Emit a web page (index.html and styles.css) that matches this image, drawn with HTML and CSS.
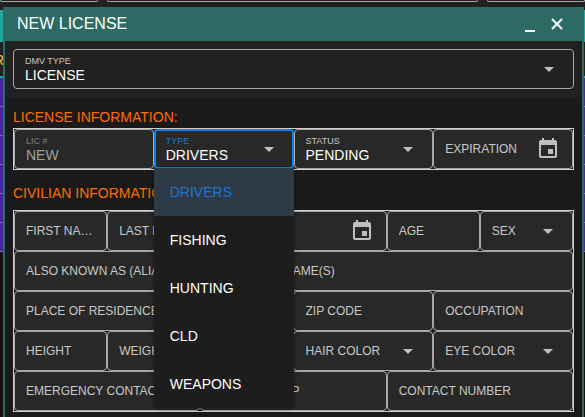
FILE: index.html
```html
<!DOCTYPE html>
<html lang="en">
<head>
<meta charset="utf-8">
<title>New License</title>
<link rel="stylesheet" href="styles.css">
</head>
<body>
<svg class="sprite">
  <symbol id="arrow" viewBox="0 0 24 24"><path d="M7 10l5 5 5-5z"/></symbol>
  <symbol id="event" viewBox="0 0 24 24"><path d="M17 12h-5v5h5v-5zM16 1v2H8V1H6v2H5c-1.11 0-1.99.9-1.99 2L3 19c0 1.1.89 2 2 2h14c1.1 0 2-.9 2-2V5c0-1.1-.9-2-2-2h-1V1h-2zm3 18H5V8h14v11z"/></symbol>
</svg>

<div class="page">
  <div class="page-inputs"><span></span><span></span><span></span></div>
  <div class="page-bar"></div>
  <div class="page-heading">R</div>
  <div class="page-rows"><i></i><i></i><i></i><i></i><i></i><i></i></div>
</div>

<main class="overlay">
  <section class="dialog" aria-labelledby="title">
    <header class="dialog-header">
      <h1 id="title">NEW LICENSE</h1>
      <button type="button" aria-label="Minimize"><svg class="minimize" viewBox="0 0 12 16"><path d="M1 15h10"/></svg></button>
      <button type="button" aria-label="Close"><svg viewBox="0 0 12 12"><path d="M1 1l10 10M11 1L1 11"/></svg></button>
    </header>

    <div class="dialog-type">
      <label class="field filled">
        <span class="label">DMV TYPE</span>
        <select><option>LICENSE</option></select>
        <svg class="icon"><use href="#arrow"/></svg>
      </label>
    </div>

    <form class="dialog-body">
      <h2>LICENSE INFORMATION:</h2>
      <div class="fields">
        <label class="field filled disabled w3">
          <span class="label">LIC #</span>
          <input type="text" value="NEW" disabled>
        </label>
        <div class="dropdown w3">
          <label class="field filled focused">
            <span class="label">TYPE</span>
            <select><option>DRIVERS</option><option>FISHING</option><option>HUNTING</option><option>CLD</option><option>WEAPONS</option></select>
            <svg class="icon"><use href="#arrow"/></svg>
          </label>
          <div class="menu">
            <button type="button" class="selected">DRIVERS</button>
            <button type="button">FISHING</button>
            <button type="button">HUNTING</button>
            <button type="button">CLD</button>
            <button type="button">WEAPONS</button>
          </div>
        </div>
        <label class="field filled w3">
          <span class="label">STATUS</span>
          <select><option>PENDING</option></select>
          <svg class="icon"><use href="#arrow"/></svg>
        </label>
        <label class="field w3">
          <span class="label">EXPIRATION</span>
          <input type="text">
          <svg class="icon"><use href="#event"/></svg>
        </label>
      </div>

      <h2>CIVILIAN INFORMATION:</h2>
      <div class="fields">
        <label class="field w2"><span class="label">FIRST NAME</span><input type="text"></label>
        <label class="field w3"><span class="label">LAST NAME</span><input type="text"></label>
        <label class="field w3"><span class="label">D.O.B.</span><input type="text"><svg class="icon"><use href="#event"/></svg></label>
        <label class="field w2"><span class="label">AGE</span><input type="text"></label>
        <label class="field w2"><span class="label">SEX</span><select><option></option></select><svg class="icon"><use href="#arrow"/></svg></label>

        <label class="field w12"><span class="label">ALSO KNOWN AS (ALIASES) AND PREVIOUS NAME(S)</span><input type="text"></label>

        <label class="field w6"><span class="label">PLACE OF RESIDENCE</span><input type="text"></label>
        <label class="field w3"><span class="label">ZIP CODE</span><input type="text"></label>
        <label class="field w3"><span class="label">OCCUPATION</span><input type="text"></label>

        <label class="field w2"><span class="label">HEIGHT</span><input type="text"></label>
        <label class="field w2"><span class="label">WEIGHT</span><input type="text"></label>
        <label class="field w2"><span class="label">RACE</span><input type="text"></label>
        <label class="field w3"><span class="label">HAIR COLOR</span><select><option></option></select><svg class="icon"><use href="#arrow"/></svg></label>
        <label class="field w3"><span class="label">EYE COLOR</span><select><option></option></select><svg class="icon"><use href="#arrow"/></svg></label>

        <label class="field w4"><span class="label">EMERGENCY CONTACT</span><input type="text"></label>
        <label class="field w4"><span class="label">RELATIONSHIP</span><input type="text"></label>
        <label class="field w4"><span class="label">CONTACT NUMBER</span><input type="text"></label>
      </div>
    </form>
  </section>
</main>
</body>
</html>
```
FILE: styles.css
```css
* { box-sizing: border-box; }

body {
  margin: 0;
  height: 100vh;
  overflow: hidden;
  background: #121212;
  color: #fff;
  font-family: "Liberation Sans", Arial, sans-serif;
  font-size: 14px;
}

h1, h2 { margin: 0; font-weight: 400; }

button, input, select {
  margin: 0;
  padding: 0;
  border: 0;
  outline: 0;
  background: none;
  color: inherit;
  font: inherit;
}

.sprite { display: none; }

/* Page behind the dialog */
.page { background: #212121; }
.page-inputs {
  display: grid;
  grid-template-columns: 98px 1fr 98px;
  gap: 9px;
  height: 10px;
}
.page-inputs span {
  height: 2px;
  border: 1px solid #a8a8a8;
  border-top: 0;
  border-radius: 0 0 4px 4px;
}
.page-bar { height: 32px; background: #26a69a; }
.page-heading {
  height: 36px;
  margin-left: -6px;
  border-bottom: 2px solid #26a69a;
  color: #fbc02d;
  line-height: 36px;
}
.page-rows { background: #4527a0; }
.page-rows i {
  display: block;
  height: 29px;
  border-bottom: 1px solid #7e6bbf;
}

/* Dialog */
.overlay {
  position: absolute;
  inset: 0;
  padding: 7px 1px 0 3px;
}
.dialog {
  height: 100%;
  border: 2px solid #2d6a64;
  border-width: 0 2px;
  background: #1a1a1a;
}
.dialog-header {
  display: flex;
  align-items: center;
  gap: 15px;
  height: 34px;
  padding: 0 19px 0 12px;
  background: #2d6a64;
}
.dialog-header h1 { flex: 1; font-size: 16px; }
.dialog-header button { display: flex; }
.dialog-header svg {
  width: 12px;
  height: 12px;
  fill: none;
  stroke: #fff;
  stroke-width: 2;
}
.dialog-header .minimize { height: 16px; }
.dialog-type { padding: 8px; background: #212121; }
.dialog-body { padding: 0 8px; }
.dialog-body h2 {
  color: #ff6d00;
  font-size: 14px;
  line-height: 16px;
  padding: 12px 0 3px;
}
.fields + h2 { padding: 15px 0 9px; }

.fields {
  display: grid;
  grid-template-columns: repeat(12, 1fr);
  border: 1px solid #d0d0d0;
}
.w2 { grid-column: span 2; }
.w3 { grid-column: span 3; }
.w4 { grid-column: span 4; }
.w6 { grid-column: span 6; }
.w12 { grid-column: span 12; }

.field {
  position: relative;
  display: flex;
  align-items: center;
  min-width: 0;
  height: 40px;
  padding: 0 12px 0 11px;
  border: 1px solid #a8a8a8;
  border-radius: 4px;
}
.fields .field { background: #282828; }
.label {
  flex: 1;
  min-width: 0;
  overflow: hidden;
  text-overflow: ellipsis;
  white-space: nowrap;
  color: #c8c8c8;
  font-size: 12px;
  line-height: 16px;
}
.icon {
  flex: none;
  width: 24px;
  height: 24px;
  fill: #bfbfbf;
  pointer-events: none;
}
.field input, .field select {
  position: absolute;
  inset: 0;
  width: 100%;
  padding: 12px 11px 0;
  appearance: none;
}
.filled .label {
  align-self: flex-start;
  padding-top: 6px;
  font-size: 9px;
  line-height: 10px;
}
.disabled .label { color: #808080; }
.disabled input { color: #a0a0a0; }
.focused { border: 2px solid #1180ea; padding: 0 11px 0 10px; }
.focused .label { color: #1976d2; padding-top: 5px; }
.focused select { padding: 12px 10px 0; }

/* Open list */
.dropdown { position: relative; }
.menu {
  position: absolute;
  z-index: 1;
  top: 100%;
  left: 0;
  right: 0;
  margin-top: -1px;
  overflow: hidden;
  border-radius: 0 0 4px 4px;
  background: #1d1d1d;
  box-shadow: 0 1px 5px rgba(0, 0, 0, .3);
}
.menu button {
  display: block;
  width: 100%;
  height: 48px;
  padding: 0 16px;
  text-align: left;
}
.menu .selected { background: #2e3a45; color: #1976d2; }
```
